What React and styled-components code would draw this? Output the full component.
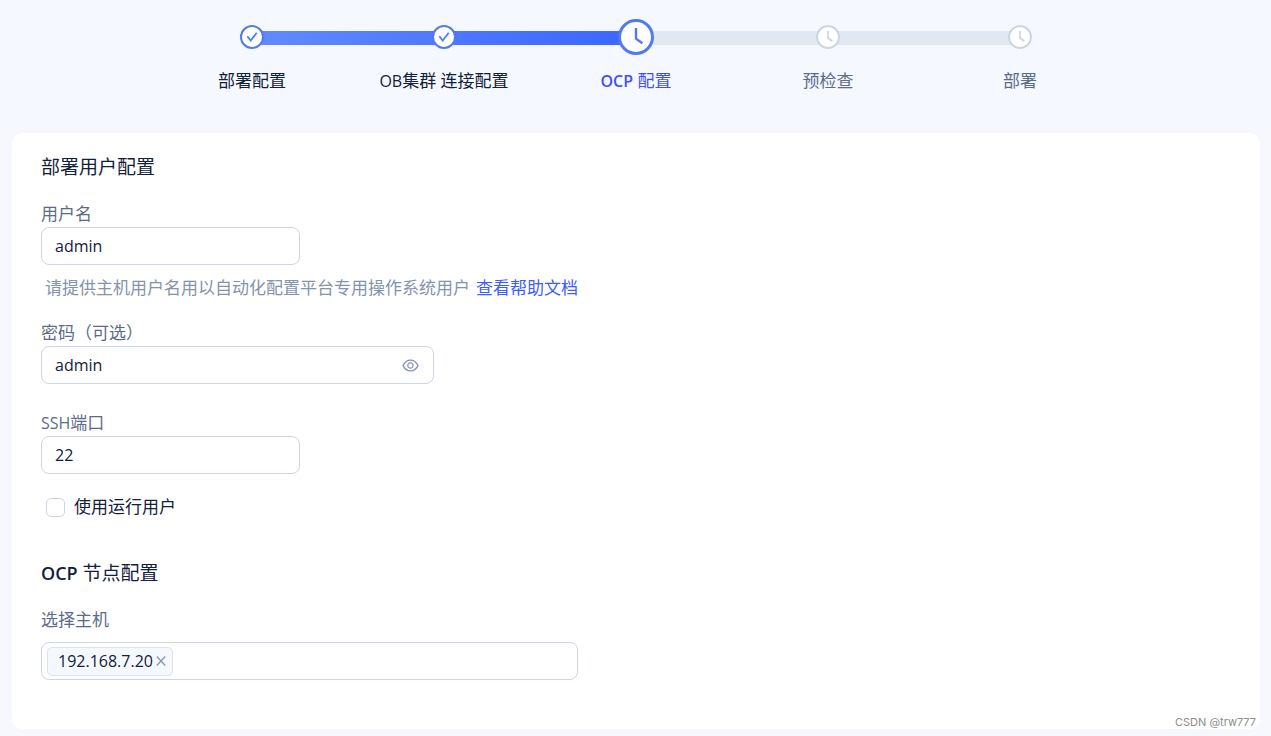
import React, { useState } from 'react';
import styled, { createGlobalStyle, css } from 'styled-components';
import { AiOutlineEye } from 'react-icons/ai';

const color = {
  page: '#f6f8fe',
  header: '#f5f8ff',
  text: '#132039',
  label: '#5c6b8a',
  hint: '#8592ad',
  border: '#cdd5e4',
  track: '#e2e8f3',
  primary: '#3d5cff',
  ring: '#5179f1',
};

const GlobalStyle = createGlobalStyle`
  *, *::before, *::after { box-sizing: border-box; }
  body {
    margin: 0;
    background: ${color.page};
    color: ${color.text};
    font-family: 'Open Sans', 'Noto Sans CJK SC', sans-serif;
    font-size: 17px;
    line-height: 26px;
  }
  input, button { font: inherit; color: inherit; }
`;

const Page = styled.div`
  position: relative;
  padding-bottom: 7px;
`;

const Header = styled.header`
  padding: 19px 11px 30px 12px;
  background: ${color.header};
`;

const Stepper = styled.nav`
  display: grid;
  width: 100%;
  max-width: 960px;
  margin: 0 auto;
`;

const Track = styled.div`
  grid-area: 1 / 1;
  align-self: start;
  height: 14px;
  margin: 12px 10% 0;
  background: ${color.track};
`;

const Progress = styled.div`
  height: 100%;
  background: linear-gradient(90deg, #628aff, #3a66ff);
`;

const StepList = styled.ol`
  grid-area: 1 / 1;
  display: grid;
  grid-template-columns: repeat(5, 1fr);
  margin: 0;
  padding: 0;
  list-style: none;
`;

const StepItem = styled.li`
  display: grid;
  grid-template-rows: 36px 26px;
  row-gap: 13px;
  place-items: center;
  white-space: nowrap;
  color: ${(p) => (p.$state === 'done' ? color.text : p.$state === 'active' ? '#3f50f7' : color.label)};
`;

const Marker = styled.svg`
  display: block;
  width: ${(p) => (p.$active ? 36 : 24)}px;
  height: ${(p) => (p.$active ? 36 : 24)}px;
  fill: none;
  stroke: ${(p) => (p.$muted ? color.border : color.ring)};
`;

const Latin = styled.span`
  font-size: 16px;
  ${(p) => p.$strong && css`font-weight: 600;`}
`;

const Card = styled.main`
  margin: 9px 11px 0 12px;
  padding: 20px 29px 49px;
  border-radius: 10px;
  background: #fff;
`;

const Section = styled.section`
  & + & { margin-top: 39px; }
`;

const Title = styled.h2`
  margin: 0 0 20px;
  font-size: 19px;
  line-height: 28px;
  font-weight: 400;
`;

const TitleLatin = styled.span`
  font-size: 18px;
  font-weight: 600;
`;

const Field = styled.div`
  max-width: ${(p) => p.$width}px;
  & + & { margin-top: 26px; }
`;

const Label = styled.label`
  display: block;
  margin-bottom: ${(p) => (p.$spaced ? 9 : 0)}px;
  color: ${color.label};
`;

const Box = styled.div`
  display: flex;
  align-items: center;
  height: 38px;
  padding: 0 ${(p) => (p.$tags ? 5 : 13)}px;
  border: 1px solid ${color.border};
  border-radius: 8px;
  background: #fff;
`;

const TextInput = styled.input`
  flex: 1;
  min-width: 0;
  padding: 0;
  border: 0;
  outline: 0;
  background: transparent;
  font-size: 16px;
`;

const IconButton = styled.button`
  display: flex;
  padding: 0;
  border: 0;
  background: none;
  color: ${color.hint};
  cursor: pointer;
`;

const Hint = styled.p`
  margin: 10px 0 19px;
  padding-left: 4px;
  color: ${color.hint};
`;

const HelpLink = styled.a`
  margin-left: 6px;
  color: ${color.primary};
  text-decoration: none;
`;

const CheckLabel = styled.label`
  display: flex;
  align-items: center;
  gap: 9px;
  width: fit-content;
  margin: 20px 0 0 5px;
`;

const Checkbox = styled.input`
  appearance: none;
  width: 19px;
  height: 19px;
  margin: 0;
  border: 1px solid ${color.border};
  border-radius: 5px;
  background: #fff;
  &:checked { background: ${color.primary}; }
`;

const Tag = styled.span`
  display: flex;
  align-items: center;
  gap: 3px;
  height: 29px;
  padding: 0 6px 0 10px;
  border: 1px solid #dde3ee;
  border-radius: 5px;
  background: ${color.header};
  font-size: 16px;
`;

const Watermark = styled.small`
  position: absolute;
  right: 15px;
  bottom: 6px;
  color: #8c8c8c;
  font-family: Inter, sans-serif;
  font-size: 11px;
  font-weight: 400;
  line-height: 16px;
`;

function StepIcon({ state }) {
  if (state === 'active') {
    return (
      <Marker $active viewBox="0 0 36 36" aria-hidden="true">
        <circle cx="18" cy="18" r="16.5" fill="#fff" strokeWidth="3" />
        <path d="M18 9v10.6l6.4 4.7" strokeWidth="2.4" />
      </Marker>
    );
  }
  return (
    <Marker $muted={state === 'wait'} viewBox="0 0 24 24" aria-hidden="true">
      <circle cx="12" cy="12" r="11" fill="#fff" strokeWidth="2" />
      {state === 'done' ? (
        <path d="M7.3 11.3l3.4 4.3 6-7.8" strokeWidth="1.8" />
      ) : (
        <path d="M12 6v7l4.4 3.3" strokeWidth="1.8" />
      )}
    </Marker>
  );
}

const steps = [
  { key: 'deploy', label: '部署配置', state: 'done' },
  { key: 'cluster', label: <><Latin>OB</Latin>集群 连接配置</>, state: 'done' },
  { key: 'ocp', label: <><Latin $strong>OCP</Latin> 配置</>, state: 'active' },
  { key: 'check', label: '预检查', state: 'wait' },
  { key: 'run', label: '部署', state: 'wait' },
];

export default function App() {
  const [visible, setVisible] = useState(true);
  const [hosts, setHosts] = useState(['192.168.7.20']);
  const current = steps.findIndex((s) => s.state === 'active');

  return (
    <Page>
      <GlobalStyle />
      <Header>
        <Stepper aria-label="部署步骤">
          <Track>
            <Progress style={{ width: `${(current / (steps.length - 1)) * 100}%` }} />
          </Track>
          <StepList>
            {steps.map((s) => (
              <StepItem key={s.key} $state={s.state} aria-current={s.state === 'active' ? 'step' : undefined}>
                <StepIcon state={s.state} />
                <span>{s.label}</span>
              </StepItem>
            ))}
          </StepList>
        </Stepper>
      </Header>

      <Card>
        <Section>
          <Title>部署用户配置</Title>
          <Field $width={259}>
            <Label htmlFor="username">用户名</Label>
            <Box>
              <TextInput id="username" defaultValue="admin" />
            </Box>
          </Field>
          <Hint>
            请提供主机用户名用以自动化配置平台专用操作系统用户
            <HelpLink href="#help">查看帮助文档</HelpLink>
          </Hint>
          <Field $width={393}>
            <Label htmlFor="password">密码（可选）</Label>
            <Box>
              <TextInput id="password" type={visible ? 'text' : 'password'} defaultValue="admin" />
              <IconButton type="button" aria-label="显示密码" onClick={() => setVisible(!visible)}>
                <AiOutlineEye size={19} />
              </IconButton>
            </Box>
          </Field>
          <Field $width={259}>
            <Label htmlFor="port"><Latin>SSH</Latin>端口</Label>
            <Box>
              <TextInput id="port" defaultValue="22" />
            </Box>
          </Field>
          <CheckLabel>
            <Checkbox type="checkbox" />
            使用运行用户
          </CheckLabel>
        </Section>

        <Section>
          <Title><TitleLatin>OCP</TitleLatin> 节点配置</Title>
          <Field $width={537}>
            <Label htmlFor="hosts" $spaced>选择主机</Label>
            <Box $tags>
              {hosts.map((host) => (
                <Tag key={host}>
                  {host}
                  <IconButton
                    type="button"
                    aria-label={`移除 ${host}`}
                    onClick={() => setHosts(hosts.filter((h) => h !== host))}
                  >
                    <svg width="10" height="10" viewBox="0 0 10 10" fill="none" stroke="currentColor" strokeWidth="1.2">
                      <path d="M.8.5l8.4 9M9.2.5L.8 9.5" />
                    </svg>
                  </IconButton>
                </Tag>
              ))}
              <TextInput id="hosts" role="combobox" aria-expanded="false" />
            </Box>
          </Field>
        </Section>
      </Card>
      <Watermark>CSDN @trw777</Watermark>
    </Page>
  );
}
